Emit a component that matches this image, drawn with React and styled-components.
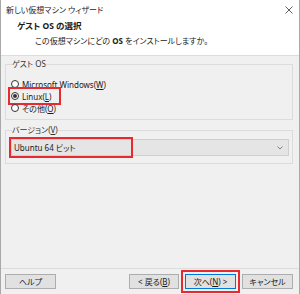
import React from "react";
import styled, { createGlobalStyle } from "styled-components";

const GlobalStyle = createGlobalStyle`
  html, body {
    margin: 0;
    padding: 0;
    background: #f0f0f0;
  }
  body {
    font-family: "Noto Sans", "Noto Sans CJK JP", sans-serif;
    font-size: 8px;
    color: #1a1a1a;
    font-feature-settings: "palt";
  }
`;

const Window = styled.div`
  width: 300px;
  height: 294px;
  box-sizing: border-box;
  background: #f0f0f0;
  border-left: 1px solid #a8a8a8;
  border-right: 1px solid #a8a8a8;
  display: flex;
  flex-direction: column;
  overflow: hidden;
`;

const TitleBar = styled.div`
  height: 18px;
  background: #ffffff;
  display: flex;
  align-items: center;
  justify-content: space-between;
  padding: 0 6px 0 5px;
  font-size: 8px;
  color: #222;
`;

const CloseButton = styled.span`
  display: flex;
  align-items: center;
  margin-top: 2px;
`;

const Header = styled.div`
  height: 38px;
  background: #ffffff;
  border-bottom: 1px solid #dcdcdc;
  box-sizing: border-box;
  padding: 3px 0 0 16px;
  display: flex;
  flex-direction: column;
  gap: 5px;
`;

const HeaderTitle = styled.div`
  font-weight: bold;
  font-size: 8.5px;
  line-height: 10px;
`;

const HeaderSub = styled.div`
  padding-left: 18px;
  line-height: 10px;
  font-size: 8px;
  b {
    font-weight: bold;
  }
`;

const Body = styled.div`
  flex: 1;
  padding: 3px 6px 0 4px;
  display: flex;
  flex-direction: column;
  gap: 5px;
`;

const Group = styled.fieldset`
  margin: 0;
  padding: ${(p) => p.$pad};
  border: 1px solid #dcdcdc;
  height: ${(p) => p.$height}px;
  box-sizing: border-box;
  display: flex;
  flex-direction: column;
`;

const Legend = styled.legend`
  padding: 0;
  margin-left: 1px;
  line-height: 10px;
  font-size: 8px;
  color: #333;
`;

const RadioRow = styled.label`
  display: flex;
  align-items: center;
  gap: 3px;
  height: 12px;
  width: fit-content;
  position: relative;
  outline: ${(p) => (p.$mark ? "2px solid #e52b2f" : "none")};
  outline-offset: 1px;
  padding-right: ${(p) => (p.$mark ? 7 : 2)}px;
`;

const Radio = styled.span`
  width: 8px;
  height: 8px;
  border: 1px solid #333;
  border-radius: 50%;
  background: #fff;
  box-sizing: border-box;
  display: flex;
  align-items: center;
  justify-content: center;
  &::after {
    content: "";
    width: 4px;
    height: 4px;
    border-radius: 50%;
    background: ${(p) => (p.$checked ? "#333" : "transparent")};
  }
`;

const Acc = styled.span`
  text-decoration: underline;
`;

const SelectWrap = styled.div`
  position: relative;
`;

const Select = styled.div`
  height: 17px;
  box-sizing: border-box;
  background: #e5e5e5;
  border: 1px solid #cfcfcf;
  display: flex;
  align-items: center;
  justify-content: space-between;
  padding: 0 5px 0 2px;
  font-size: 8px;
`;

const Mark = styled.span`
  position: absolute;
  left: -2px;
  top: -2px;
  width: 124px;
  height: 21px;
  border: 2px solid #e52b2f;
  box-sizing: border-box;
  pointer-events: none;
`;

const Footer = styled.div`
  border-top: 1px solid #dcdcdc;
  height: 26px;
  box-sizing: border-box;
  padding: 5px 6px 0 4px;
  display: flex;
  gap: 6px;
`;

const Button = styled.button`
  width: ${(p) => p.$w || 51}px;
  height: 15px;
  margin: 0;
  padding: 0;
  font-family: inherit;
  font-size: 8px;
  color: #1a1a1a;
  background: #e1e1e1;
  border: 1px solid ${(p) => (p.$primary ? "#0078d7" : "#adadad")};
  box-sizing: border-box;
  margin-left: ${(p) => (p.$push ? "auto" : "0")};
  outline: ${(p) => (p.$mark ? "2px solid #e52b2f" : "none")};
  outline-offset: 2px;
  font-feature-settings: "palt";
`;

export default function App() {
  return (
    <>
      <GlobalStyle />
      <Window>
        <TitleBar>
          <span>新しい仮想マシン ウィザード</span>
          <CloseButton>
            <svg width="8" height="8" viewBox="0 0 8 8">
              <path d="M0.5 0.5L7.5 7.5M7.5 0.5L0.5 7.5" stroke="#333" strokeWidth="0.8" />
            </svg>
          </CloseButton>
        </TitleBar>
        <Header>
          <HeaderTitle>ゲスト OS の選択</HeaderTitle>
          <HeaderSub>
            この仮想マシンにどの <b>OS</b> をインストールしますか。
          </HeaderSub>
        </Header>
        <Body>
          <Group $height={61} $pad="9px 0 0 5px">
            <Legend>ゲスト OS</Legend>
            <RadioRow>
              <Radio />
              <span>
                Microsoft Windows(<Acc>W</Acc>)
              </span>
            </RadioRow>
            <RadioRow $mark>
              <Radio $checked />
              <span>
                Linux(<Acc>L</Acc>)
              </span>
            </RadioRow>
            <RadioRow>
              <Radio />
              <span>
                その他(<Acc>O</Acc>)
              </span>
            </RadioRow>
          </Group>
          <Group $height={39} $pad="4px 3px 0 5px">
            <Legend>
              バージョン(<Acc>V</Acc>)
            </Legend>
            <SelectWrap>
              <Select>
                <span>Ubuntu 64 ビット</span>
                <svg width="6" height="4" viewBox="0 0 6 4">
                  <path d="M0.5 0.5L3 3L5.5 0.5" fill="none" stroke="#666" strokeWidth="0.8" />
                </svg>
              </Select>
              <Mark />
            </SelectWrap>
          </Group>
        </Body>
        <Footer>
          <Button>ヘルプ</Button>
          <Button $push $w={50}>
            &lt; 戻る(<Acc>B</Acc>)
          </Button>
          <Button $primary $mark>
            次へ(<Acc>N</Acc>) &gt;
          </Button>
          <Button>キャンセル</Button>
        </Footer>
      </Window>
    </>
  );
}
